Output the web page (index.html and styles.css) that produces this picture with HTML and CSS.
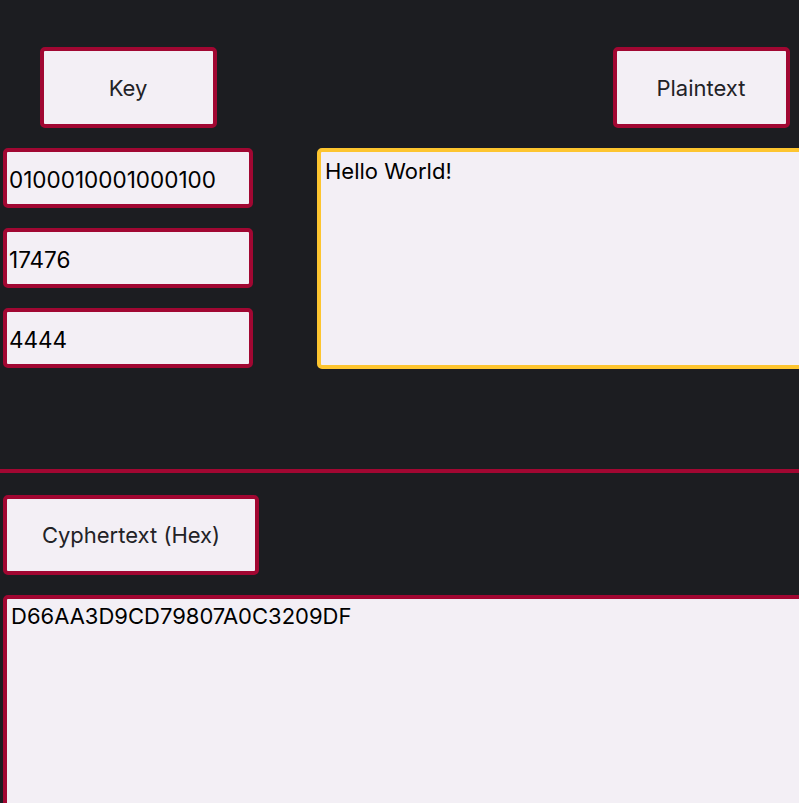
FILE: index.html
```html
<!DOCTYPE html>
<html>
<head>
<meta charset="utf-8">
<link rel="stylesheet" href="styles.css">
</head>
<body>
<div class="app">
  <section class="top">
    <div class="col col-key">
      <button class="btn btn-small">Key</button>
      <input class="field" type="text" value="0100010001000100">
      <input class="field" type="text" value="17476">
      <input class="field" type="text" value="4444">
    </div>
    <div class="col col-plain">
      <button class="btn btn-small">Plaintext</button>
      <textarea class="area area-plain">Hello World!</textarea>
    </div>
  </section>
  <hr class="divider">
  <section class="bottom">
    <button class="btn btn-wide">Cyphertext (Hex)</button>
    <textarea class="area area-cypher">D66AA3D9CD79807A0C3209DF</textarea>
  </section>
</div>
</body>
</html>
```

FILE: styles.css
```css
html, body {
  margin: 0;
  padding: 0;
  background: #1c1d21;
  overflow: hidden;
}

.app {
  width: 1100px;
  font-family: Inter, "Noto Sans", sans-serif;
}

.top {
  display: grid;
  grid-template-columns: 250px 768px;
  column-gap: 64px;
  padding: 47px 0 0 3px;
}

.col {
  display: flex;
  flex-direction: column;
  align-items: center;
  gap: 20px;
}

.btn {
  box-sizing: border-box;
  background: #f3eff5;
  border: 4px solid #a10732;
  border-radius: 5px;
  color: #222226;
  font-family: Inter, "Noto Sans", sans-serif;
  font-size: 22px;
  padding: 0;
  margin: 0;
}

.btn-small {
  width: 177px;
  height: 81px;
}

.field {
  box-sizing: border-box;
  width: 250px;
  height: 60px;
  margin: 0;
  padding: 3px 2px 0;
  background: #f3eff5;
  border: 4px solid #a10732;
  border-radius: 5px;
  color: #000;
  font-family: Inter, "Noto Sans", sans-serif;
  font-size: 22.5px;
  outline: none;
}

.area {
  box-sizing: border-box;
  display: block;
  margin: 0;
  background: #f3eff5;
  border-radius: 5px;
  color: #000;
  font-family: Inter, "Noto Sans", sans-serif;
  font-size: 22px;
  resize: none;
  outline: none;
}

.area-plain {
  width: 768px;
  height: 221px;
  border: 4px solid #fdc52f;
  padding: 6px 4px 5px;
}

.divider {
  margin: 100px 0 0 0;
  height: 4px;
  border: 0;
  background: #a10732;
}

.bottom {
  display: flex;
  flex-direction: column;
  align-items: flex-start;
  gap: 20px;
  padding: 22px 0 0 3px;
}

.btn-wide {
  width: 256px;
  height: 80px;
}

.area-cypher {
  width: 1000px;
  height: 300px;
  border: 4px solid #a10732;
  padding: 4px 4px;
}
```
